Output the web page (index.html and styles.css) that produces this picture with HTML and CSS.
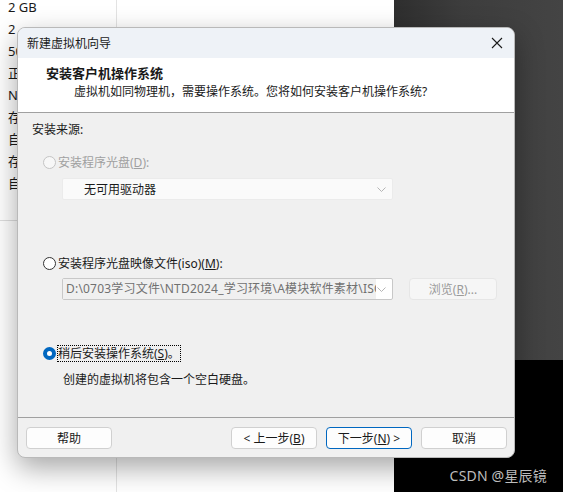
FILE: index.html
```html
<!DOCTYPE html>
<html>
<head>
    <meta charset="utf-8">
    <meta name="viewport" content="width=device-width, initial-scale=1">
    <title>新建虚拟机向导</title>
    <link rel="stylesheet" href="styles.css">
</head>
<body>
    <div class="screen">
        <div class="app">
            <div class="sidebar">
                <ul class="specs">
                    <li class="first">2 GB</li>
                    <li>2</li>
                    <li>50 GB</li>
                    <li>正在使用</li>
                    <li>NAT</li>
                    <li>存在</li>
                    <li>自动检测</li>
                    <li>存在</li>
                    <li>自动检测</li>
                </ul>
                <div class="divider"></div>
            </div>
            <div class="content"></div>
        </div>
        <div class="desktop">
            <div class="desktop-top"></div>
            <div class="desktop-bottom"></div>
        </div>

        <!-- 對話框 -->
        <div class="dialog">
            <div class="titlebar">
                <span class="title">新建虚拟机向导</span>
                <svg class="close" width="12" height="12" viewBox="0 0 12 12">
                    <path d="M1 1 L11 11 M11 1 L1 11" stroke="#1b1b1b" stroke-width="1.1" fill="none"/>
                </svg>
            </div>
            <div class="header">
                <div class="header-title">安装客户机操作系统</div>
                <div class="header-sub">虚拟机如同物理机，需要操作系统。您将如何安装客户机操作系统?</div>
            </div>
            <div class="body">
                <div class="group-label">安装来源:</div>

                <div class="option disabled">
                    <span class="radio"></span>
                    <span>安装程序光盘(<u>D</u>):</span>
                </div>
                <div class="select first-select">
                    <span class="select-text">无可用驱动器</span>
                    <svg class="chevron" width="9" height="5" viewBox="0 0 9 5">
                        <path d="M0.5 0.5 L4.5 4.5 L8.5 0.5" stroke="#b5b5b5" fill="none"/>
                    </svg>
                </div>

                <div class="option iso-option">
                    <span class="radio"></span>
                    <span>安装程序光盘映像文件(iso)(<u>M</u>):</span>
                </div>
                <div class="iso-row">
                    <div class="select path-select">
                        <span class="path-text">D:\0703学习文件\NTD2024_学习环境\A模块软件素材\ISO</span>
                        <svg class="chevron" width="9" height="5" viewBox="0 0 9 5">
                            <path d="M0.5 0.5 L4.5 4.5 L8.5 0.5" stroke="#b5b5b5" fill="none"/>
                        </svg>
                    </div>
                    <button class="btn browse">浏览(<u>R</u>)...</button>
                </div>

                <div class="option later-option">
                    <span class="radio checked"></span>
                    <span class="focus">稍后安装操作系统(<u>S</u>)。</span>
                </div>
                <div class="hint">创建的虚拟机将包含一个空白硬盘。</div>
            </div>
            <div class="footer">
                <button class="btn">帮助</button>
                <div class="spacer"></div>
                <button class="btn">&lt; 上一步(<u>B</u>)</button>
                <button class="btn primary">下一步(<u>N</u>) &gt;</button>
                <button class="btn">取消</button>
            </div>
        </div>

        <div class="watermark">CSDN @星辰镜</div>
    </div>
</body>
</html>
```

FILE: styles.css
```css
body {
    margin: 0;
    font-family: "Noto Sans", "Noto Sans CJK SC", sans-serif;
    color: #1a1a1a;
}

.screen {
    position: relative;
    width: 563px;
    height: 492px;
    overflow: hidden;
    display: flex;
}

/* 背景應用程式 */
.app {
    width: 394px;
    display: flex;
    background-color: #fff;
}

.sidebar {
    width: 116px;
    border-right: 1px solid #e3e3e3;
}

.specs {
    list-style: none;
    margin: 0;
    padding: 0 0 0 8px;
    font-size: 13px;
    line-height: 22px;
    white-space: nowrap;
}

.specs .first {
    margin-top: -4px;
}

.divider {
    margin-top: 26px;
    border-top: 1px solid #dedede;
}

.content {
    flex: 1;
}

.desktop {
    flex: 1;
    display: flex;
    flex-direction: column;
}

.desktop-top {
    height: 360px;
    background: linear-gradient(to right, #2e2e2e, #3d3d3d 40%, #444);
}

.desktop-bottom {
    flex: 1;
    background-color: #000;
}

/* 對話框 */
.dialog {
    position: absolute;
    left: 17px;
    top: 27px;
    width: 496px;
    height: 429px;
    border: 1px solid #b9b9b9;
    border-radius: 8px;
    overflow: hidden;
    background-color: #f0f0f0;
    box-shadow: 0 10px 28px rgba(0, 0, 0, 0.35);
    display: flex;
    flex-direction: column;
    font-size: 12px;
}

.titlebar {
    height: 30px;
    background-color: #eef2f7;
    display: flex;
    align-items: center;
    justify-content: space-between;
    padding: 0 11px 0 9px;
}

.title {
    font-size: 12px;
    color: #1a1a1a;
}

.header {
    height: 54px;
    background-color: #fff;
    border-bottom: 1px solid #a0a0a0;
}

.header-title {
    margin: 6px 0 0 28px;
    font-size: 13px;
    font-weight: bold;
    line-height: 18px;
}

.header-sub {
    margin: 1px 0 0 56px;
    line-height: 18px;
}

.body {
    height: 305px;
    padding: 9px 0 0 14px;
    box-sizing: border-box;
    border-bottom: 1px solid #a0a0a0;
}

.group-label {
    line-height: 16px;
}

.option {
    display: flex;
    align-items: center;
    height: 16px;
    margin: 16px 0 0 11px;
    gap: 2px;
}

.option.disabled {
    color: #a0a0a0;
}

.radio {
    width: 11px;
    height: 11px;
    border: 1px solid #333;
    border-radius: 50%;
    background-color: #fff;
    flex-shrink: 0;
}

.disabled .radio {
    border-color: #c4c4c4;
    background-color: #f7f7f7;
}

.radio.checked {
    width: 5px;
    height: 5px;
    border: 4px solid #0067c0;
}

.select {
    display: flex;
    align-items: center;
    justify-content: space-between;
    width: 331px;
    height: 22px;
    box-sizing: border-box;
    background-color: #fafafa;
    border: 1px solid #ebebeb;
    border-radius: 2px;
    padding-right: 6px;
}

.first-select {
    margin: 8px 0 0 30px;
}

.select-text {
    padding-left: 21px;
}

.iso-option {
    margin-top: 55px;
}

.iso-row {
    display: flex;
    align-items: center;
    gap: 16px;
    margin: 7px 0 0 30px;
}

.path-select {
    background-color: #fff;
    border-color: #c8c8c8;
    overflow: hidden;
}

.path-text {
    width: 310px;
    overflow: hidden;
    white-space: nowrap;
    background-color: #f0f0f0;
    color: #707070;
    padding-left: 3px;
    line-height: 20px;
    letter-spacing: 0.2px;
}

.later-option {
    margin-top: 45px;
}

.focus {
    outline: 1px dotted #000;
    outline-offset: 0;
    line-height: 15px;
}

.hint {
    margin: 11px 0 0 31px;
    line-height: 16px;
}

.btn {
    width: 86px;
    height: 22px;
    padding: 0;
    font-family: "Noto Sans", "Noto Sans CJK SC", sans-serif;
    font-size: 12px;
    color: #1a1a1a;
    background-color: #fdfdfd;
    border: 1px solid #d0d0d0;
    border-radius: 4px;
}

.btn.browse {
    width: 88px;
    color: #9a9a9a;
    background-color: #f6f6f6;
    border-color: #e6e6e6;
}

.btn.primary {
    border-color: #0067c0;
}

.footer {
    flex: 1;
    display: flex;
    align-items: flex-start;
    gap: 9px;
    padding: 9px 7px 0 8px;
}

.spacer {
    flex: 1;
}

.watermark {
    position: absolute;
    right: 16px;
    bottom: 7px;
    font-size: 14px;
    color: #bdbdbd;
    letter-spacing: 0.2px;
}
```
